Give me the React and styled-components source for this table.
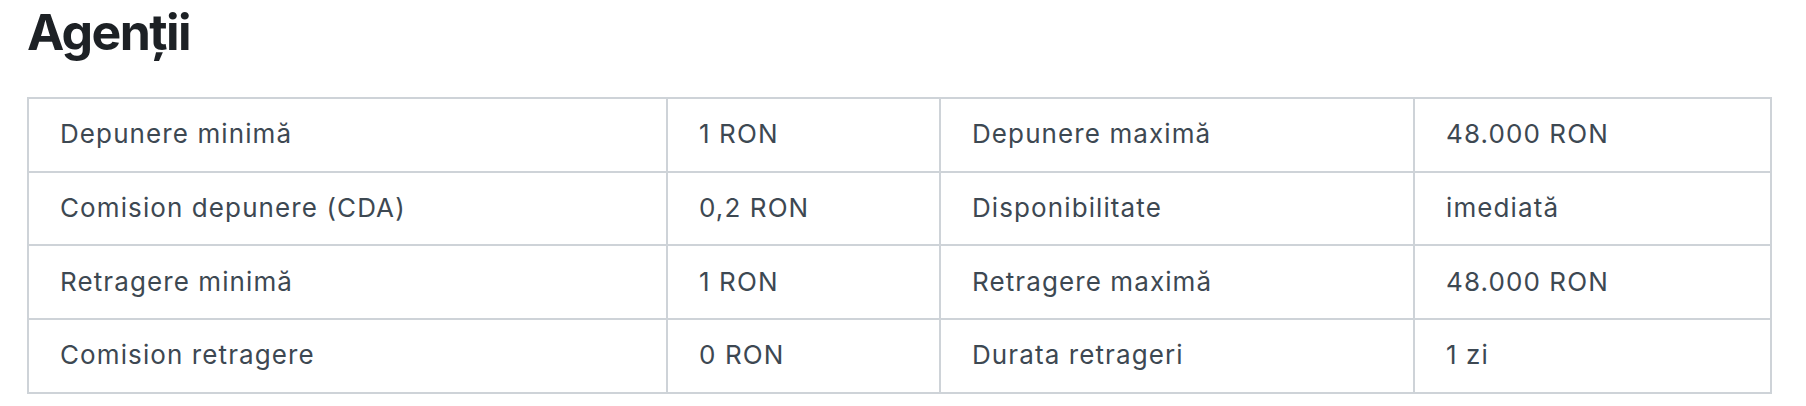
import React from "react";
import styled, { createGlobalStyle } from "styled-components";

const Global = createGlobalStyle`
  html, body { margin: 0; padding: 0; background: #ffffff; }
  body { font-family: Inter, "Noto Sans", sans-serif; }
`;

const Page = styled.div`
  padding: 0 36px 0 27px;
`;

const Title = styled.h2`
  margin: 0;
  padding-top: 1px;
  font-family: Inter, sans-serif;
  font-weight: 700;
  font-size: 50px;
  line-height: 62px;
  color: #1d2125;
  letter-spacing: -1.6px;
`;

const Table = styled.table`
  margin-top: 34px;
  width: 100%;
  border-collapse: collapse;
  border: 2px solid #ced3d8;
  table-layout: fixed;
`;

const Col = styled.col`
  width: ${(p) => p.$w}px;
`;

const Cell = styled.td`
  border: 2px solid #ced3d8;
  height: 73.7px;
  padding: 0 0 2px 31px;
  font-family: Inter, sans-serif;
  font-size: 26px;
  letter-spacing: 1.1px;
  color: #3d4852;
  vertical-align: middle;
  box-sizing: border-box;
`;

const rows = [
  ["Depunere minimă", "1 RON", "Depunere maximă", "48.000 RON"],
  ["Comision depunere (CDA)", "0,2 RON", "Disponibilitate", "imediată"],
  ["Retragere minimă", "1 RON", "Retragere maximă", "48.000 RON"],
  ["Comision retragere", "0 RON", "Durata retrageri", "1 zi"],
];

export default function App() {
  return (
    <Page>
      <Global />
      <Title>Agenții</Title>
      <Table>
        <colgroup>
          <Col $w={639} />
          <Col $w={273} />
          <Col $w={474} />
          <Col $w={357} />
        </colgroup>
        <tbody>
          {rows.map((r, i) => (
            <tr key={i}>
              {r.map((c, j) => (
                <Cell key={j}>{c}</Cell>
              ))}
            </tr>
          ))}
        </tbody>
      </Table>
    </Page>
  );
}
